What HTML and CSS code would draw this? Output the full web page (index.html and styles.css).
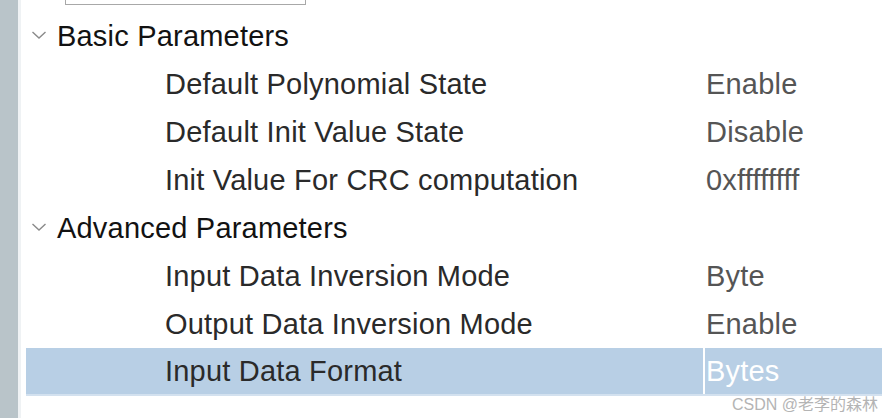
FILE: index.html
```html
<!DOCTYPE html>
<html>
<head>
<meta charset="utf-8">
<link rel="stylesheet" href="styles.css">
</head>
<body>
<div class="page">
  <div class="sidebar"></div>
  <div class="edge"></div>
  <div class="main">
    <div class="topbox"></div>
    <div class="tree">
      <div class="row group">
        <svg class="chev" width="16" height="10" viewBox="0 0 16 10"><path d="M1.5 2 L8 8 L14.5 2" fill="none" stroke="#8a8a8a" stroke-width="1.4"/></svg>
        <span class="gname">Basic Parameters</span>
      </div>
      <div class="row item"><span class="name">Default Polynomial State</span><span class="val">Enable</span></div>
      <div class="row item"><span class="name">Default Init Value State</span><span class="val">Disable</span></div>
      <div class="row item"><span class="name">Init Value For CRC computation</span><span class="val">0xffffffff</span></div>
      <div class="row group">
        <svg class="chev" width="16" height="10" viewBox="0 0 16 10"><path d="M1.5 2 L8 8 L14.5 2" fill="none" stroke="#8a8a8a" stroke-width="1.4"/></svg>
        <span class="gname">Advanced Parameters</span>
      </div>
      <div class="row item"><span class="name">Input Data Inversion Mode</span><span class="val">Byte</span></div>
      <div class="row item"><span class="name">Output Data Inversion Mode</span><span class="val">Enable</span></div>
      <div class="row item selected"><span class="name">Input Data Format</span><span class="val">Bytes</span></div>
    </div>
  </div>
  <div class="watermark">CSDN @老李的森林</div>
</div>
</body>
</html>
```

FILE: styles.css
```css
html, body {
  margin: 0;
  padding: 0;
  background: #ffffff;
}
.page {
  position: relative;
  width: 882px;
  height: 418px;
  display: flex;
  overflow: hidden;
  font-family: "Liberation Sans", Arial, sans-serif;
}
.sidebar {
  width: 18px;
  background: #b9c4c9;
  flex: none;
}
.edge {
  width: 3px;
  background: #eff2f4;
  flex: none;
}
.main {
  flex: 1;
  display: flex;
  flex-direction: column;
  padding-left: 5px;
}
.topbox {
  margin-left: 39px;
  width: 239px;
  height: 4px;
  border: 1px solid #a8a8a8;
  border-top: none;
  margin-bottom: 7px;
}
.tree {
  display: flex;
  flex-direction: column;
}
.row {
  height: 48px;
  display: flex;
  align-items: center;
  box-sizing: border-box;
  font-size: 29px;
  letter-spacing: 0.2px;
}
.group {
  padding-left: 5px;
}
.chev {
  margin-right: 10px;
  margin-top: -2px;
}
.gname {
  color: #121212;
}
.item {
  padding-left: 139px;
}
.name {
  width: 538px;
  color: #2a2a2a;
  flex: none;
}
.val {
  color: #555555;
  padding-left: 3px;
  flex: 1;
  height: 100%;
  display: flex;
  align-items: center;
}
.selected {
  background: #b8cfe5;
  border-bottom: 2px solid #d3e1ef;
}
.selected .val {
  color: #ffffff;
  border-left: 2px solid #ffffff;
  padding-left: 1px;
}
.watermark {
  position: absolute;
  right: 4px;
  bottom: 3px;
  font-size: 16px;
  letter-spacing: 0;
  color: #b4b4b4;
  font-family: "Liberation Sans", "Noto Sans CJK SC", sans-serif;
}
```
